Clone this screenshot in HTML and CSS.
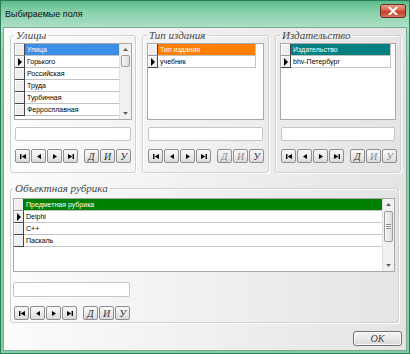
FILE: index.html
```html
<!DOCTYPE html>
<html lang="ru">
<head>
<meta charset="utf-8">
<title>Выбираемые поля</title>
<link rel="stylesheet" href="styles.css">
</head>
<body>
<div class="window">
  <div class="titlebar">
    <span class="title">Выбираемые поля</span>
    <span class="close"><svg width="10" height="8" viewBox="0 0 10 8"><path d="M1.5 0.5 L8.5 7.5 M8.5 0.5 L1.5 7.5" stroke="#fff" stroke-width="2" stroke-linecap="square"/></svg></span>
  </div>
  <div class="client">
    <div class="top-row">
      <fieldset class="group g1">
        <legend>Улицы</legend>
        <div class="grid">
          <div class="rows">
            <div class="row head"><span class="ind"></span><span class="cell w-streets hl-blue">Улица</span></div>
            <div class="row"><span class="ind cur"><i class="tri"></i></span><span class="cell w-streets">Горького</span></div>
            <div class="row"><span class="ind"></span><span class="cell w-streets">Российская</span></div>
            <div class="row"><span class="ind"></span><span class="cell w-streets">Труда</span></div>
            <div class="row"><span class="ind"></span><span class="cell w-streets">Турбинная</span></div>
            <div class="row"><span class="ind"></span><span class="cell w-streets">Ферросплавная</span></div>
          </div>
          <div class="vscroll">
            <span class="sb-btn"><svg width="5" height="3" viewBox="0 0 5 3"><path d="M0 3 L2.5 0 L5 3Z" fill="#606060"/></svg></span>
            <span class="thumb t-small"></span>
            <span class="sb-space"></span>
            <span class="sb-btn"><svg width="5" height="3" viewBox="0 0 5 3"><path d="M0 0 L2.5 3 L5 0Z" fill="#606060"/></svg></span>
          </div>
        </div>
        <div class="edit"></div>
        <div class="nav">
          <span class="btn"><svg width="6" height="5" viewBox="0 0 6 5"><rect x="0" y="0" width="1.4" height="5"/><path d="M6 0 L1.6 2.5 L6 5Z"/></svg></span>
          <span class="btn"><svg width="4" height="5" viewBox="0 0 4 5"><path d="M4 0 L0 2.5 L4 5Z"/></svg></span>
          <span class="btn"><svg width="4" height="5" viewBox="0 0 4 5"><path d="M0 0 L4 2.5 L0 5Z"/></svg></span>
          <span class="btn"><svg width="6" height="5" viewBox="0 0 6 5"><path d="M0 0 L4.4 2.5 L0 5Z"/><rect x="4.6" y="0" width="1.4" height="5"/></svg></span>
          <span class="btn letter first-letter">Д</span>
          <span class="btn letter">И</span>
          <span class="btn letter">У</span>
        </div>
      </fieldset>

      <fieldset class="group g2">
        <legend>Тип издания</legend>
        <div class="grid">
          <div class="rows">
            <div class="row head"><span class="ind"></span><span class="cell w-type hl-orange">Тип издания</span></div>
            <div class="row"><span class="ind cur"><i class="tri"></i></span><span class="cell w-type">учебник</span></div>
          </div>
        </div>
        <div class="edit"></div>
        <div class="nav">
          <span class="btn"><svg width="6" height="5" viewBox="0 0 6 5"><rect x="0" y="0" width="1.4" height="5"/><path d="M6 0 L1.6 2.5 L6 5Z"/></svg></span>
          <span class="btn"><svg width="4" height="5" viewBox="0 0 4 5"><path d="M4 0 L0 2.5 L4 5Z"/></svg></span>
          <span class="btn"><svg width="4" height="5" viewBox="0 0 4 5"><path d="M0 0 L4 2.5 L0 5Z"/></svg></span>
          <span class="btn"><svg width="6" height="5" viewBox="0 0 6 5"><path d="M0 0 L4.4 2.5 L0 5Z"/><rect x="4.6" y="0" width="1.4" height="5"/></svg></span>
          <span class="btn letter first-letter dim">Д</span>
          <span class="btn letter dim">И</span>
          <span class="btn letter">У</span>
        </div>
      </fieldset>

      <fieldset class="group g3">
        <legend>Издательство</legend>
        <div class="grid">
          <div class="rows">
            <div class="row head"><span class="ind"></span><span class="cell w-pub hl-teal">Издательство</span></div>
            <div class="row"><span class="ind cur"><i class="tri"></i></span><span class="cell w-pub">bhv-Петербург</span></div>
          </div>
        </div>
        <div class="edit"></div>
        <div class="nav">
          <span class="btn"><svg width="6" height="5" viewBox="0 0 6 5"><rect x="0" y="0" width="1.4" height="5"/><path d="M6 0 L1.6 2.5 L6 5Z"/></svg></span>
          <span class="btn"><svg width="4" height="5" viewBox="0 0 4 5"><path d="M4 0 L0 2.5 L4 5Z"/></svg></span>
          <span class="btn"><svg width="4" height="5" viewBox="0 0 4 5"><path d="M0 0 L4 2.5 L0 5Z"/></svg></span>
          <span class="btn"><svg width="6" height="5" viewBox="0 0 6 5"><path d="M0 0 L4.4 2.5 L0 5Z"/><rect x="4.6" y="0" width="1.4" height="5"/></svg></span>
          <span class="btn letter first-letter">Д</span>
          <span class="btn letter dim">И</span>
          <span class="btn letter dim">У</span>
        </div>
      </fieldset>
    </div>

    <fieldset class="group gb">
      <legend>Объектная рубрика</legend>
      <div class="grid grid-big">
        <div class="rows">
          <div class="row head"><span class="ind"></span><span class="cell w-big hl-green">Предметная рубрика</span></div>
          <div class="row"><span class="ind cur"><i class="tri"></i></span><span class="cell w-big">Delphi</span></div>
          <div class="row"><span class="ind"></span><span class="cell w-big">C++</span></div>
          <div class="row"><span class="ind"></span><span class="cell w-big">Паскаль</span></div>
        </div>
        <div class="vscroll">
          <span class="sb-btn"><svg width="5" height="3" viewBox="0 0 5 3"><path d="M0 3 L2.5 0 L5 3Z" fill="#606060"/></svg></span>
          <span class="thumb t-big"><i class="grip"></i></span>
          <span class="sb-space"></span>
          <span class="sb-btn"><svg width="5" height="3" viewBox="0 0 5 3"><path d="M0 0 L2.5 3 L5 0Z" fill="#606060"/></svg></span>
        </div>
      </div>
      <div class="edit edit-big"></div>
      <div class="nav nav-big">
        <span class="btn"><svg width="6" height="5" viewBox="0 0 6 5"><rect x="0" y="0" width="1.4" height="5"/><path d="M6 0 L1.6 2.5 L6 5Z"/></svg></span>
        <span class="btn"><svg width="4" height="5" viewBox="0 0 4 5"><path d="M4 0 L0 2.5 L4 5Z"/></svg></span>
        <span class="btn"><svg width="4" height="5" viewBox="0 0 4 5"><path d="M0 0 L4 2.5 L0 5Z"/></svg></span>
        <span class="btn"><svg width="6" height="5" viewBox="0 0 6 5"><path d="M0 0 L4.4 2.5 L0 5Z"/><rect x="4.6" y="0" width="1.4" height="5"/></svg></span>
        <span class="btn letter first-letter">Д</span>
        <span class="btn letter">И</span>
        <span class="btn letter">У</span>
      </div>
    </fieldset>

    <div class="footer">
      <span class="ok">OK</span>
    </div>
  </div>
</div>
</body>
</html>
```
FILE: styles.css
```css
* { box-sizing: border-box; }
html, body { margin: 0; padding: 0; }
body {
  width: 410px;
  height: 354px;
  overflow: hidden;
  font-family: "Liberation Sans", Arial, sans-serif;
  background: #fff;
}

.window {
  width: 410px;
  height: 354px;
  display: flex;
  flex-direction: column;
  border: 1px solid #2f7d57;
  padding: 0 2px 2px;
  background: linear-gradient(to bottom, #58bb8a 0px, #86cfaa 10px, #ace0c5 26px, #8fd1b0 60px, #84cca7 100%);
}

.titlebar {
  height: 26px;
  flex: none;
  display: flex;
  align-items: center;
  justify-content: space-between;
}
.title {
  padding-left: 2px;
  font-size: 9px;
  color: #111;
}
.close {
  align-self: flex-start;
  margin-top: 3px;
  margin-right: 1px;
  width: 26px;
  height: 14px;
  border: 1px solid #6e2a1f;
  border-radius: 3px;
  background: linear-gradient(to bottom, #eba38f 0%, #d5644c 45%, #c2402a 55%, #d2745c 100%);
  display: flex;
  align-items: center;
  justify-content: center;
}

.client {
  flex: 1;
  border: 1px solid #7aa993;
  background: linear-gradient(to right, #fcfcfc 0%, #efefef 55%, #e4e4e4 100%);
  padding: 1px 4px 0 6px;
  display: flex;
  flex-direction: column;
}

.top-row {
  display: grid;
  grid-template-columns: 126px 127px 126px;
  column-gap: 6px;
}

.group {
  margin: 0;
  min-width: 0;
  padding: 2px 3px 9px;
  border: 1px solid #cdd1d4;
  border-radius: 3px;
  box-shadow: inset 1px 1px 0 #fff, 1px 1px 0 #fff;
}
.group legend {
  padding: 0 2px;
  font-family: "Liberation Serif", "Times New Roman", serif;
  font-style: italic;
  font-size: 11px;
  line-height: 12px;
  color: #444;
}
.g2, .g3 { padding-left: 4px; padding-right: 4px; }

.grid {
  display: flex;
  height: 77px;
  border: 1px solid #a9a9a9;
  background: #fff;
  overflow: hidden;
}
.rows {
  flex: 1;
  min-width: 0;
  display: flex;
  flex-direction: column;
}
.row {
  display: flex;
  height: 12px;
  flex: none;
}
.ind {
  width: 10px;
  flex: none;
  background: #efefef;
  border-right: 1px solid #444;
  border-bottom: 1px solid #444;
  box-shadow: inset 1px 1px 0 #fff;
  display: flex;
  align-items: center;
  justify-content: center;
}
.head .ind { border-bottom-color: #9a9a9a; }
.tri {
  display: block;
  width: 0;
  height: 0;
  border-left: 4px solid #000;
  border-top: 4px solid transparent;
  border-bottom: 4px solid transparent;
}
.cell {
  flex: none;
  border-right: 1px solid #c4c4c4;
  border-bottom: 1px solid #c4c4c4;
  padding-left: 2px;
  font-size: 7px;
  line-height: 11px;
  white-space: nowrap;
  overflow: hidden;
  color: #000;
}
.head .cell { color: #fff; }
.w-streets { width: 95px; }
.w-type { width: 98px; }
.w-pub { width: 100px; }
.w-big { width: 360px; }
.hl-blue { background: #3d8ee6; }
.hl-orange { background: #ff8000; }
.hl-teal { background: #008080; }
.hl-green { background: #008000; }

.vscroll {
  width: 12px;
  flex: none;
  background: #f0f0f0;
  border-left: 1px solid #e2e2e2;
  display: flex;
  flex-direction: column;
}
.sb-btn {
  height: 11px;
  flex: none;
  display: flex;
  align-items: center;
  justify-content: center;
}
.thumb {
  flex: none;
  margin: 0 1px;
  border: 1px solid #9c9c9c;
  border-radius: 2px;
  background: linear-gradient(to right, #f7f7f7, #dcdcdc);
  display: flex;
  align-items: center;
  justify-content: center;
}
.t-small { height: 12px; }
.t-big { height: 31px; margin-top: 1px; }
.grip {
  display: block;
  width: 5px;
  height: 5px;
  border-top: 1px solid #8a8a8a;
  border-bottom: 1px solid #8a8a8a;
  background: linear-gradient(#fff 0 1px, #8a8a8a 1px 2px, #fff 2px);
}
.sb-space { flex: 1; }

.edit {
  margin: 7px 1px 0;
  height: 14px;
  border: 1px solid #c6c6c6;
  border-radius: 2px;
  background: #fff;
}
.nav {
  margin: 8px 0 0 1px;
  display: flex;
  gap: 1px;
}
.btn {
  width: 15px;
  height: 14px;
  flex: none;
  border: 1px solid #8d8f90;
  border-radius: 2px;
  background: linear-gradient(to bottom, #f8f8f8 0%, #ececec 50%, #d9d9d9 100%);
  display: flex;
  align-items: center;
  justify-content: center;
}
.btn svg { fill: #000; }
.letter {
  font-family: "Liberation Serif", "Times New Roman", serif;
  font-style: italic;
  font-size: 10px;
  color: #333;
}
.letter.dim { color: #8a8a8a; }
.first-letter { margin-left: 5px; }

.gb {
  margin-top: 9px;
  width: 389px;
  padding: 4px 3px 2px 2px;
}
.grid-big { height: 74px; }
.edit-big {
  margin: 10px 0 0;
  width: 117px;
  height: 15px;
}
.nav-big { margin-top: 9px; }

.footer {
  display: flex;
  justify-content: flex-end;
  margin-top: 8px;
}
.ok {
  width: 49px;
  height: 15px;
  border: 1px solid #707070;
  border-radius: 3px;
  background: linear-gradient(to bottom, #f4f4f4 0%, #e9e9e9 50%, #d8d8d8 100%);
  box-shadow: inset 0 0 0 1px #fbfbfb;
  display: flex;
  align-items: center;
  justify-content: center;
  font-family: "Liberation Serif", "Times New Roman", serif;
  font-style: italic;
  font-size: 10px;
  color: #444;
}
```
